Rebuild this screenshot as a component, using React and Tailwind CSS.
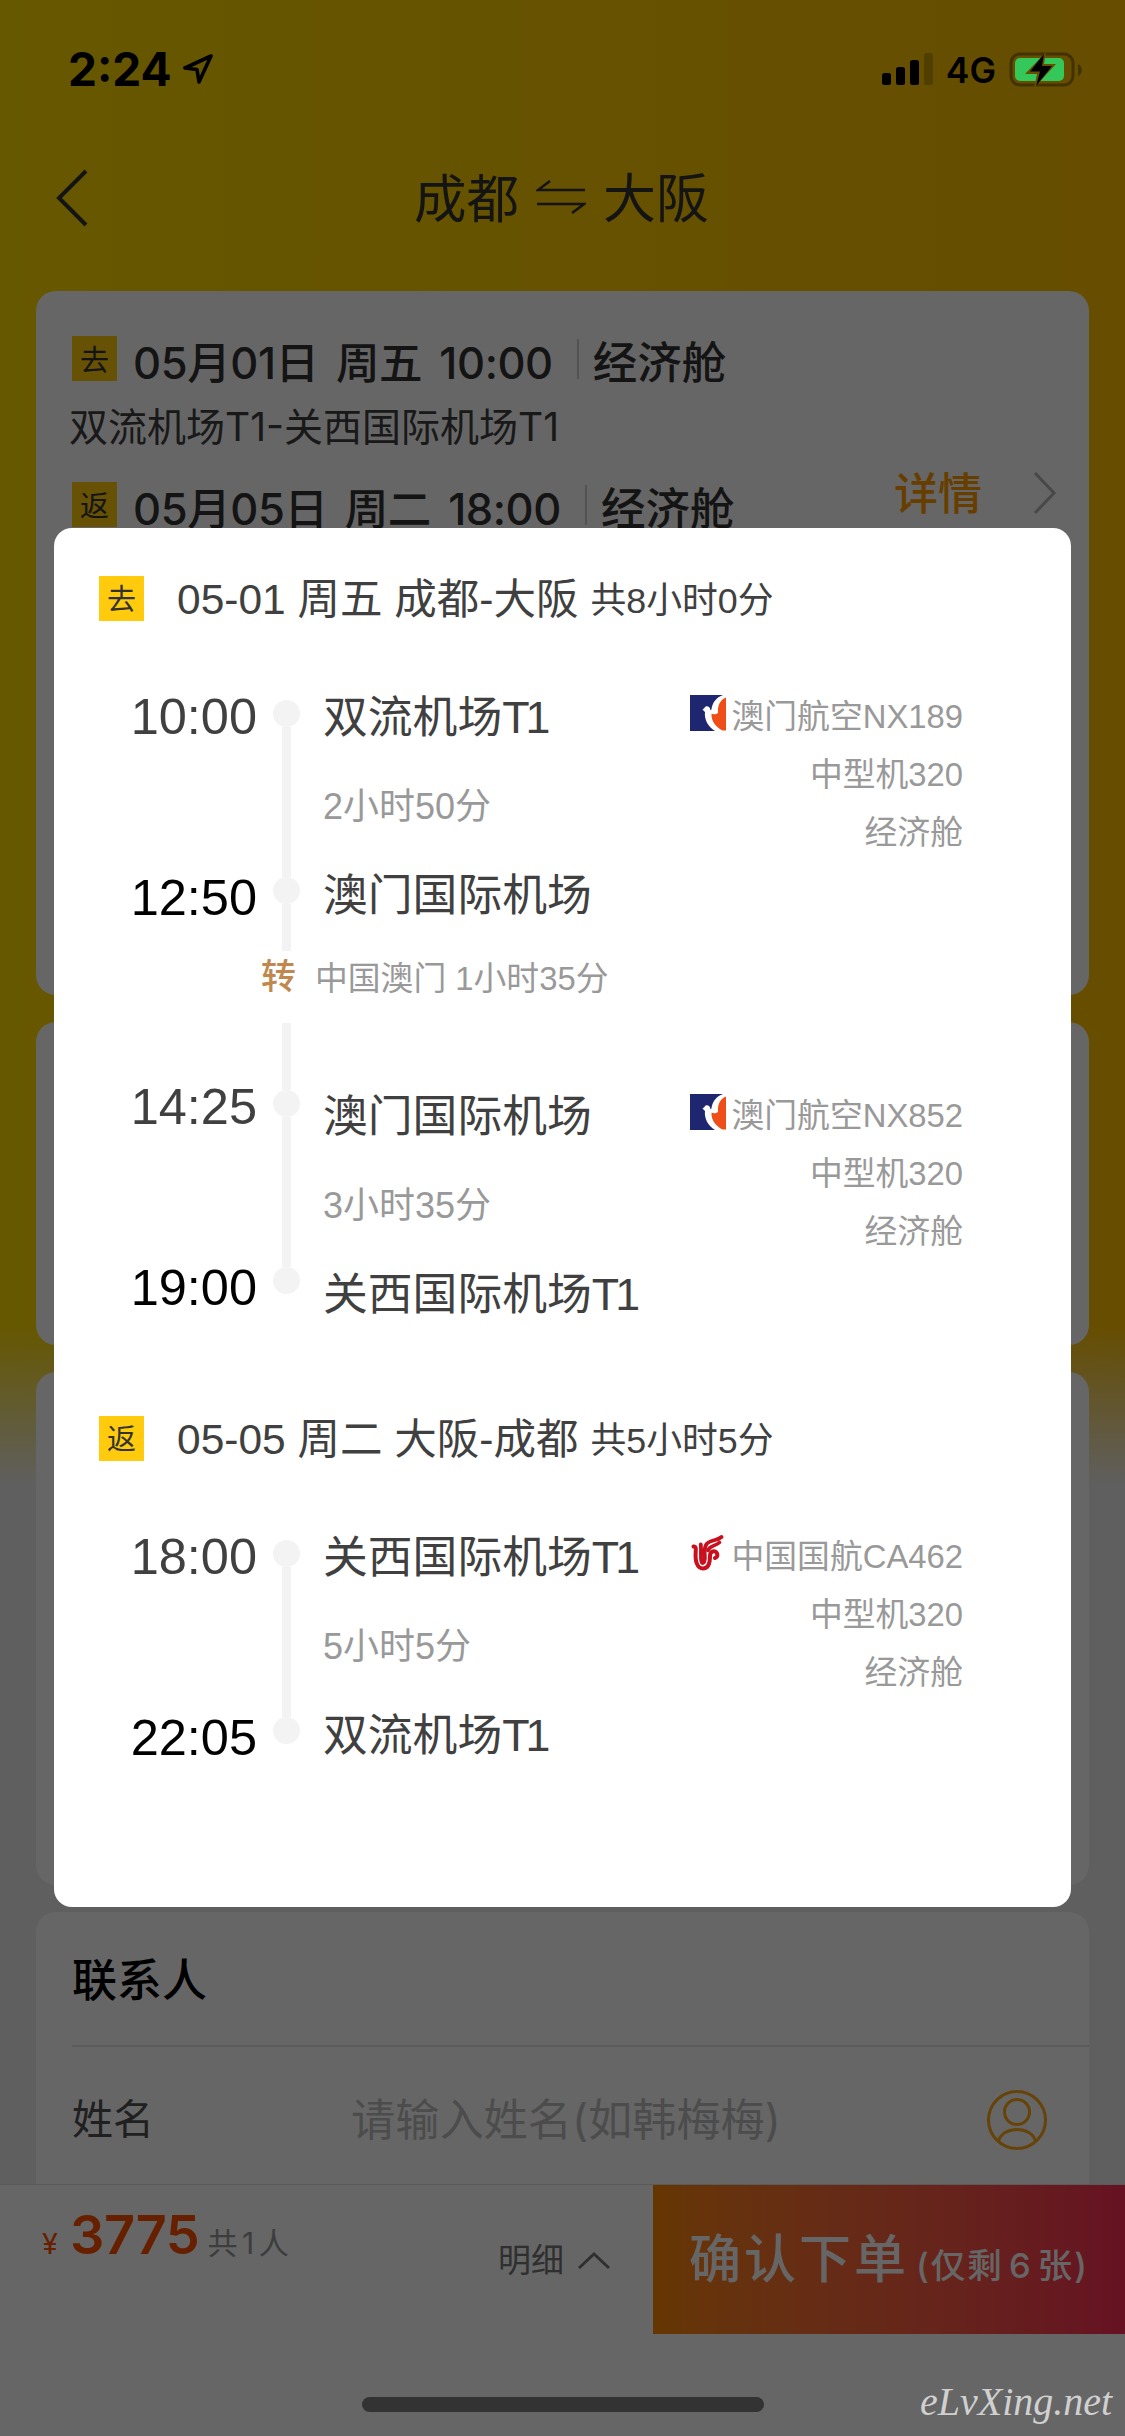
import React from 'react';

const trips = [
  {
    tag: '去',
    title: '05-01 周五 成都-大阪',
    total: '共8小时0分',
    legs: [
      { depart: '10:00', arrive: '12:50', from: '双流机场', fromTerminal: 'T1', to: '澳门国际机场', duration: '2小时50分', carrier: 'macau', flight: '澳门航空NX189', lineAfter: true },
      { depart: '14:25', arrive: '19:00', from: '澳门国际机场', to: '关西国际机场', toTerminal: 'T1', duration: '3小时35分', carrier: 'macau', flight: '澳门航空NX852', lineBefore: true },
    ],
    transfer: '中国澳门 1小时35分',
  },
  {
    tag: '返',
    title: '05-05 周二 大阪-成都',
    total: '共5小时5分',
    legs: [
      { depart: '18:00', arrive: '22:05', from: '关西国际机场', fromTerminal: 'T1', to: '双流机场', toTerminal: 'T1', duration: '5小时5分', carrier: 'airchina', flight: '中国国航CA462' },
    ],
  },
];

function MacauLogo() {
  return (
    <svg viewBox="0 0 36 36" className="w-9 h-9 mr-[6px] mb-2">
      <rect width="36" height="36" fill="#1f2670" />
      <path d="M12.500 14.500L14.500 13C15 10.500 19 10.500 20 13.500C20.500 16 21 15.500 21.500 14C22.500 7 27 2 33 0H36V36H25C18 32 14 24 15 17Z" fill="#fff" />
      <path d="M36 2.500C30 5 27.500 10 28 18C26 19.500 24 19.500 21.500 18.800C21 26 26 32.500 32.500 35.500H36Z" fill="#f04e18" />
    </svg>
  );
}

function AirChinaLogo() {
  return (
    <svg viewBox="0 0 36 36" className="w-9 h-9 mr-[6px] mb-2" fill="none" stroke="#c8101e" strokeLinecap="round">
      <path d="M3.500 11.500C6 11 6 13 5.700 17C5 26 7 33.500 13 33.500C19 33.500 20 27 20 21C20 16 24 15.500 26 17C28 19 28 22 25 23" strokeWidth="4" />
      <path d="M10.800 9.500C11.300 15 10.500 22 11.300 26C12 29.500 14.500 28 14.800 24C15.200 17 13 13 17 8.500C21 4.500 27 6 31.500 2" strokeWidth="3.800" />
      <path d="M18 15.500C19.500 10.500 25 11.500 29.500 7.500" strokeWidth="3.600" />
    </svg>
  );
}

function Tag({ children }) {
  return (
    <span className="w-[45px] h-[45px] bg-[#ffcb0c] text-[#333] text-[29px] leading-[49px] text-center shrink-0">
      {children}
    </span>
  );
}

function Airport({ name, terminal }) {
  return (
    <span className="text-[44.8px] text-[#404040]">
      {name}
      {terminal && <span className="tracking-[-4px]">{terminal}</span>}
    </span>
  );
}

function Leg({ leg }) {
  return (
    <div className="flex h-[267px] whitespace-nowrap">
      <div className="w-[203px] pt-[15px] flex flex-col gap-[121px] text-right text-[50.5px] leading-[60px]">
        <span className="text-[#404040]">{leg.depart}</span>
        <span className="text-black">{leg.arrive}</span>
      </div>
      <div className="w-[27px] ml-4 flex flex-col items-center">
        <div className={leg.lineBefore ? 'w-[9px] h-7 bg-[#f3f3f3]' : 'w-[9px] h-7'} />
        <div className="w-[27px] h-[27px] rounded-full bg-[#f3f3f3]" />
        <div className="w-[9px] h-[150px] bg-[#f3f3f3]" />
        <div className="w-[27px] h-[27px] rounded-full bg-[#f3f3f3]" />
        {leg.lineAfter && <div className="w-[9px] flex-1 bg-[#f3f3f3]" />}
      </div>
      <div className={leg.lineBefore ? 'ml-[23px] mt-[10px] flex flex-col leading-[89px]' : 'ml-[23px] mt-[1px] flex flex-col leading-[89px]'}>
        <Airport name={leg.from} terminal={leg.fromTerminal} />
        <span className="text-[36px] text-[#999]">{leg.duration}</span>
        <Airport name={leg.to} terminal={leg.toTerminal} />
      </div>
      <div className={leg.lineBefore ? 'ml-auto mt-2 pt-[17px] pr-[108px] text-right' : 'ml-auto pt-4 pr-[108px] text-right'}>
        <div className="flex items-center text-[32.8px] leading-[58px] text-[#999]">
          {leg.carrier === 'macau' ? <MacauLogo /> : <AirChinaLogo />}
          {leg.flight}
        </div>
        <div className="text-[32.8px] leading-[58px] text-[#999]">中型机320</div>
        <div className="text-[32.8px] leading-[58px] text-[#999]">经济舱</div>
      </div>
    </div>
  );
}

function Transfer({ text }) {
  return (
    <div className="h-[123px] flex flex-col">
      <div className="w-[9px] h-3 ml-[228px] bg-[#f3f3f3]" />
      <div className="h-[72px] flex pl-[207px] leading-[51px]">
        <span className="text-[35px] font-medium text-[#c0884f]">转</span>
        <span className="text-[32.8px] leading-[56px] ml-[19px] text-[#999]">{text}</span>
      </div>
      <div className="w-[9px] h-[39px] ml-[228px] bg-[#f3f3f3]" />
    </div>
  );
}

function Trip({ trip }) {
  return (
    <section>
      <div className="flex items-center h-[45px] pl-[45px] mb-[51px] text-[#404040] whitespace-nowrap">
        <Tag>{trip.tag}</Tag>
        <span className="ml-[33px] pt-[2px] text-[42.5px] leading-[45px]">{trip.title}</span>
        <span className="ml-[12px] pt-[6px] text-[35.8px] leading-[45px]">{trip.total}</span>
      </div>
      {trip.legs.map((leg, i) => (
        <React.Fragment key={leg.flight}>
          {i > 0 && <Transfer text={trip.transfer} />}
          <Leg leg={leg} />
        </React.Fragment>
      ))}
    </section>
  );
}

function SummaryRow({ tag, date }) {
  return (
    <div className="flex items-center h-[54px] whitespace-nowrap font-medium">
      <span className="w-[45px] h-[45px] mb-[9px] bg-[#ffcb0c] text-[#333] font-normal text-[29px] leading-[49px] text-center">{tag}</span>
      <span className="ml-4 text-[43.5px] leading-[54px] tracking-[-0.4px] [word-spacing:6px] text-[#333]">{date}</span>
      <span className="ml-[24px] mb-[9px] w-[2px] h-10 bg-[#ccc]" />
      <span className="ml-[14px] text-[44.5px] leading-[54px] text-[#333]">经济舱</span>
    </div>
  );
}

function StatusBar() {
  return (
    <div className="h-[130px] flex items-start pl-[68px] pr-[41px] pt-[42px] text-black">
      <span className="text-[46px] leading-[54px] font-bold">2:24</span>
      <svg viewBox="0 0 30 30" className="w-[30px] h-[30px] mt-3 ml-[11px]" fill="none" stroke="currentColor" strokeWidth="3.600" strokeLinejoin="round">
        <path d="M28 2L2 14L14 15.500L16 28Z" />
      </svg>
      <svg viewBox="0 0 52 33" className="w-[52px] h-[33px] ml-auto mt-[11px]">
        <rect x="0" y="20" width="9" height="12" rx="2.500" />
        <rect x="14" y="14" width="9" height="18" rx="2.500" />
        <rect x="28" y="7" width="9" height="25" rx="2.500" />
        <rect x="42" y="0" width="9" height="32" rx="2.500" opacity=".2" />
      </svg>
      <span className="ml-[12px] text-[35.500px] leading-[57px] font-semibold">4G</span>
      <svg viewBox="0 0 75 36" className="w-[75px] h-9 ml-[13px] mt-[10px]">
        <rect x="2" y="2" width="62" height="31" rx="9" fill="none" stroke="#000" strokeOpacity=".35" strokeWidth="3" />
        <path d="M69 12C74 14 74 22 69 24Z" opacity=".35" />
        <rect x="6" y="6" width="49" height="23" rx="5" fill="#34c759" />
        <path d="M37 0L16 22H28L25 36L47 12H35Z" fill="#665000" />
        <path d="M35 2L21 19.500H31L27 34L43 14H33Z" />
      </svg>
    </div>
  );
}

function Page() {
  return (
    <div className="h-[2436px] flex flex-col bg-[#ededed]">
      <div className="flex-1 overflow-hidden bg-[linear-gradient(to_bottom,transparent_1325px,#ededed_1485px),linear-gradient(to_right,#ffdb00,#ffc000)]">
        <header className="mt-[130px] h-[136px] flex items-center justify-center relative text-[#333]">
          <svg viewBox="0 0 32 58" className="absolute left-14 top-[39px] w-8 h-[58px]" fill="none" stroke="currentColor" strokeWidth="4">
            <path d="M30 2L3 29L30 56" />
          </svg>
          <span className="pt-[3px] text-[52.5px]">成都</span>
          <svg viewBox="0 0 50 34" className="w-[50px] h-[34px] mx-[17px] mb-[2px]" fill="none" stroke="currentColor" strokeWidth="2.600">
            <path d="M14 1L2 10H49M1 24H48L36 33" />
          </svg>
          <span className="pt-[3px] pr-[2px] text-[53px]">大阪</span>
        </header>
        <main className="px-9 pt-[25px] flex flex-col gap-[27px]">
          <div className="h-[704px] rounded-[20px] bg-white pl-9 pr-8 pt-[45px]">
            <SummaryRow tag="去" date="05月01日 周五 10:00" />
            <div className="h-[92px] -ml-[3px] text-[39px] leading-[74px] text-[#404040]">双流机场T1-关西国际机场T1</div>
            <div className="flex items-start justify-between">
              <SummaryRow tag="返" date="05月05日 周二 18:00" />
              <div className="flex items-center -mt-[18px] text-[44px] leading-[60px] font-medium text-[#ff9c00]">
                详情
                <svg viewBox="0 0 24 44" className="w-6 h-11 ml-[51px] mb-[3px]" fill="none" stroke="#b5b5b5" strokeWidth="3">
                  <path d="M2 2L21 22L2 42" />
                </svg>
              </div>
            </div>
          </div>
          <div className="h-[323px] rounded-[20px] bg-white" />
          <div className="h-[513px] rounded-[20px] bg-white" />
          <div className="h-[400px] rounded-t-[20px] bg-white pl-9">
            <h2 className="h-[135px] border-b-2 border-[#e5e5e5] text-[45px] leading-[138px] font-medium text-black">联系人</h2>
            <div className="h-[146px] flex items-center pr-[41px]">
              <span className="w-[279px] text-[41px] text-[#505050]">姓名</span>
              <span className="text-[44.2px] text-[#bfbfbf]">请输入姓名(如韩梅梅)</span>
              <svg viewBox="0 0 62 62" className="w-[62px] h-[62px] ml-auto" fill="none" stroke="#ffa914" strokeWidth="3">
                <circle cx="31" cy="31" r="28.500" />
                <circle cx="31" cy="23" r="12.500" />
                <path d="M12.500 52.500C16 36.500 46 36.500 49.500 52.500" />
              </svg>
            </div>
          </div>
        </main>
      </div>
      <footer className="h-[252px] shrink-0 border-t border-[#e0e0e0] bg-white flex items-start whitespace-nowrap">
        <div className="w-[653px] h-[149px] flex">
          <div className="flex items-baseline pl-[42px] pt-[12px] text-[#ff5200]">
            <span className="text-[29px]">¥</span>
            <span className="ml-[12px] text-[54px] leading-[76px] font-semibold tracking-[-0.4px]">3775</span>
            <span className="ml-2 text-[30px] tracking-[4.500px] text-[#999]">共1人</span>
          </div>
          <div className="ml-auto flex items-center h-[151px] text-[33px] text-[#777] pr-[43px]">
            明细
            <svg viewBox="0 0 32 18" className="w-8 h-[18px] ml-[14px]" fill="none" stroke="currentColor" strokeWidth="3">
              <path d="M1 16L16 2L31 16" />
            </svg>
          </div>
        </div>
        <button className="flex-1 h-[149px] bg-linear-to-r from-[#ff8800] to-[#ff2d55] text-white flex items-baseline pl-9 font-medium">
          <span className="text-[52px] leading-[149px] tracking-[3px]">确认下单</span>
          <span className="ml-[7px] text-[34.500px] tracking-[2px] [word-spacing:-6px]">(仅剩 6 张)</span>
        </button>
      </footer>
    </div>
  );
}

export default function App() {
  return (
    <div className="relative w-[1125px] h-[2436px] overflow-hidden font-[Inter,'Noto_Sans_CJK_SC',sans-serif]">
      <Page />

      {/* Mask */}
      <div className="absolute inset-0 bg-black/60 pt-[528px] px-[54px]">
        <div className="h-[1379px] rounded-[18px] bg-white pt-12 flex flex-col gap-[87px] font-['Liberation_Sans','Noto_Sans_CJK_SC',sans-serif]">
          {trips.map((trip) => (
            <Trip key={trip.tag} trip={trip} />
          ))}
        </div>
      </div>

      {/* System chrome stays above the mask */}
      <div className="absolute inset-0 flex flex-col">
        <StatusBar />
        <div className="mt-auto h-[39px] flex justify-center">
          <div className="w-[402px] h-[15px] rounded-full bg-[#333]" />
        </div>
      </div>
      <span className="absolute left-[920px] top-[2380px] text-[40px] leading-[44px] italic text-[#d0d0d0] font-['Liberation_Serif',serif]">eLvXing.net</span>
    </div>
  );
}
